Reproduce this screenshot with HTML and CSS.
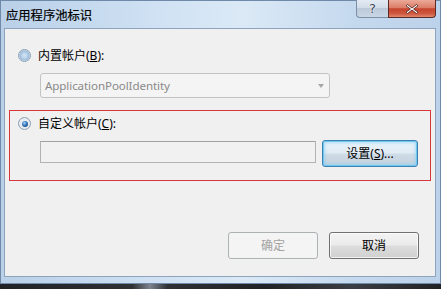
FILE: index.html
```html
<!DOCTYPE html>
<html lang="zh-CN">
<head>
<meta charset="utf-8">
<title>应用程序池标识</title>
<link rel="stylesheet" href="styles.css">
</head>
<body>
<div class="screen">
  <div class="window">
    <div class="titlebar">
      <div class="title">应用程序池标识</div>
      <div class="caption-buttons">
        <div class="cap-btn help"><span class="q">?</span></div>
        <div class="cap-btn close">
          <svg width="16" height="12" viewBox="0 0 16 12">
            <path d="M3.5 1.5 L8 5 L12.5 1.5 L14 2.8 L9.6 6 L14 9.2 L12.5 10.5 L8 7 L3.5 10.5 L2 9.2 L6.4 6 L2 2.8 Z" fill="#fff" stroke="#5a2a25" stroke-width="0.9" stroke-linejoin="round"/>
          </svg>
        </div>
      </div>
    </div>
    <div class="client">
      <div class="row row-first">
        <span class="radio"></span>
        <span class="label">内置帐户(<u>B</u>):</span>
      </div>
      <div class="combo">
        <span class="combo-text">ApplicationPoolIdentity</span>
        <span class="combo-arrow"></span>
      </div>
      <div class="group">
        <div class="row">
          <span class="radio checked"></span>
          <span class="label">自定义帐户(<u>C</u>):</span>
        </div>
        <div class="input-row">
          <div class="textbox"></div>
          <div class="btn default">设置(<u>S</u>)...</div>
        </div>
      </div>
      <div class="spacer"></div>
      <div class="actions">
        <div class="btn disabled">确定</div>
        <div class="btn">取消</div>
      </div>
    </div>
  </div>
  <div class="desktop"></div>
</div>
</body>
</html>
```
FILE: styles.css
```css
html, body {
  margin: 0;
  padding: 0;
}
body {
  font-family: "Noto Sans", "Noto Sans CJK SC", sans-serif;
  font-size: 12px;
  color: #000;
}
.screen {
  width: 441px;
  height: 289px;
  display: flex;
  flex-direction: column;
  overflow: hidden;
  background: #2d2f33;
}
.window {
  height: 284px;
  display: flex;
  flex-direction: column;
  background: linear-gradient(to right, #b9d0e8 0%, #cfe1f3 35%, #dbe9f6 55%, #c5d9ee 80%, #bcd2ea 100%);
  box-shadow: inset 0 0 0 1px #6f8aa8;
}
.titlebar {
  height: 28px;
  display: flex;
  justify-content: space-between;
  align-items: flex-start;
}
.title {
  font-family: "Noto Sans CJK SC", sans-serif;
  font-size: 12.3px;
  line-height: 14px;
  padding: 8px 0 0 6px;
  color: #000;
  -webkit-text-stroke: 0.2px #000;
}
.caption-buttons {
  display: flex;
  margin-right: 5px;
}
.cap-btn {
  height: 18px;
  box-sizing: border-box;
  display: flex;
  align-items: center;
  justify-content: center;
}
.help {
  width: 32px;
  border: 1px solid #7d8ea5;
  border-top: 0;
  border-right: 0;
  border-bottom-left-radius: 4px;
  background: linear-gradient(to bottom, #e3eaf3 0%, #d2dce8 45%, #bcc9d9 50%, #c9d6e6 100%);
}
.q {
  font-family: "DejaVu Sans", sans-serif;
  font-size: 13px;
  line-height: 14px;
  color: #3a4556;
  text-shadow: 0 0 1px #fff, 0 0 2px #fff;
  margin-top: 1px;
}
.close {
  width: 48px;
  border: 1px solid #5c2a24;
  border-top: 0;
  border-bottom-right-radius: 4px;
  background: linear-gradient(to bottom, #eba898 0%, #dc7d68 45%, #c5432c 52%, #d0573f 80%, #e08a6f 100%);
}
.client {
  height: 249px;
  margin: 0 5px 0 4px;
  box-sizing: border-box;
  border: 1px solid #8ea3bc;
  background: #f0f0f0;
  display: flex;
  flex-direction: column;
  padding: 20px 16px 17px 0;
}
.row {
  display: flex;
  align-items: center;
  height: 13px;
}
.row-first {
  margin-left: 13px;
}
.radio {
  width: 13px;
  height: 13px;
  box-sizing: border-box;
  border-radius: 50%;
  border: 1px solid #8aa0b8;
  background: radial-gradient(circle at 50% 50%, #d4e6f5 0%, #b6d0e8 40%, #9ab8d6 62%, #e6eef6 70%, #f3f6f9 100%);
  position: relative;
  flex: none;
}
.radio.checked {
  border-color: #8d9fb3;
  background: radial-gradient(circle at 50% 50%, #f4f6f8 0%, #e4e9ee 70%, #d8dfe7 100%);
}
.radio.checked::after {
  content: "";
  position: absolute;
  left: 2.5px;
  top: 2.5px;
  width: 6px;
  height: 6px;
  border-radius: 50%;
  background: radial-gradient(circle at 40% 35%, #a9d7f5 0%, #3d7fc4 40%, #1b4b86 75%, #0f2f57 100%);
}
.label {
  margin-left: 7px;
  line-height: 14px;
  white-space: nowrap;
}
u {
  text-decoration-thickness: 1px;
  text-underline-offset: 1px;
}
.combo {
  margin: 11px 0 0 35px;
  width: 290px;
  height: 25px;
  box-sizing: border-box;
  border: 1px solid #c3c3c3;
  border-radius: 3px;
  background: #f4f4f4;
  display: flex;
  align-items: center;
  justify-content: space-between;
  padding: 0 5px 0 4px;
}
.combo-text {
  color: #8a8a8a;
  font-size: 11.6px;
  letter-spacing: -0.1px;
}
.combo-arrow {
  width: 0;
  height: 0;
  border-left: 3.5px solid transparent;
  border-right: 3.5px solid transparent;
  border-top: 4px solid #a7a7a7;
  margin-top: 1px;
}
.group {
  margin: 12px 0 0 4px;
  width: 422px;
  height: 71px;
  box-sizing: border-box;
  border: 1px solid #d8363f;
  padding: 6px 0 0 8px;
  display: flex;
  flex-direction: column;
}
.group .row {
  height: 13px;
  margin-top: 0;
}
.input-row {
  display: flex;
  align-items: flex-start;
  margin: 10px 0 0 22px;
}
.textbox {
  width: 276px;
  height: 22px;
  box-sizing: border-box;
  margin-top: 1px;
  border: 1px solid #b3b3b3;
  border-top-color: #a3a3a3;
  background: #f1f1f1;
}
.btn {
  width: 90px;
  height: 27px;
  box-sizing: border-box;
  border: 1px solid #707070;
  border-radius: 3px;
  background: linear-gradient(to bottom, #f3f3f3 0%, #ebebeb 48%, #dddddd 52%, #d0d0d0 100%);
  box-shadow: inset 0 0 0 1px rgba(255, 255, 255, 0.75);
  display: flex;
  align-items: center;
  justify-content: center;
  font-family: "Noto Sans", "Noto Sans CJK SC", sans-serif;
  font-size: 12px;
  line-height: 14px;
  color: #000;
}
.btn.default {
  width: 96px;
  margin-left: 6px;
  border-color: #3c7fb1;
  box-shadow: inset 0 0 0 1px #6fc8ef, inset 0 0 3px 2px rgba(120, 205, 245, 0.55);
  background: linear-gradient(to bottom, #eaf3fa 0%, #e0ebf4 48%, #cfdce7 52%, #c3d1dd 100%);
}
.btn.disabled {
  border-color: #adb2b5;
  background: #f4f4f4;
  box-shadow: none;
  color: #a2a2a2;
}
.spacer {
  flex: 1;
}
.actions {
  display: flex;
  justify-content: flex-end;
  gap: 11px;
}
.desktop {
  flex: 1;
  background: linear-gradient(to right, #202225 0%, #2e3034 30%, #7d848e 34%, #2e3034 38%, #202225 60%, #3a3d43 80%, #202225 100%);
}
```
